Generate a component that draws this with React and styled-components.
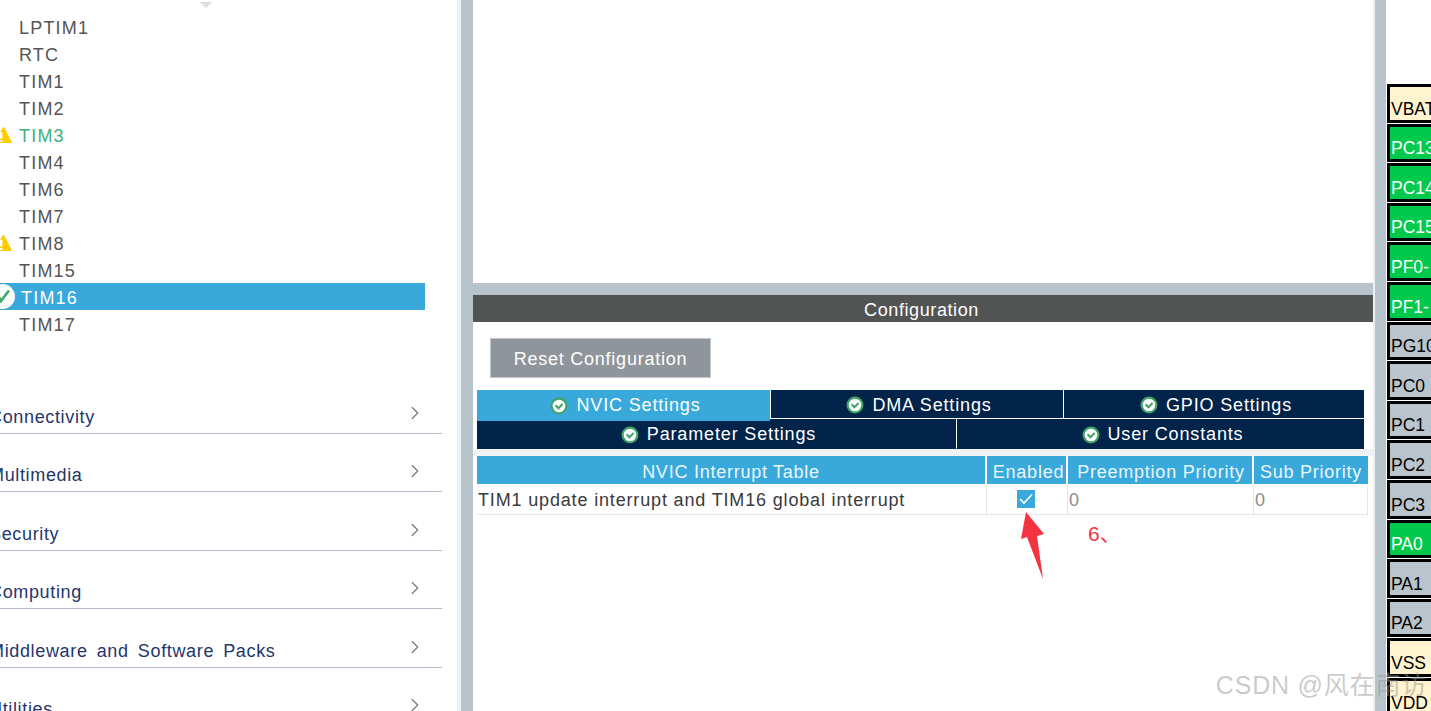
import styled, { createGlobalStyle } from 'styled-components';
import { ChevronRight } from 'lucide-react';

const timers = [
  { name: 'LPTIM1' },
  { name: 'RTC' },
  { name: 'TIM1' },
  { name: 'TIM2' },
  { name: 'TIM3', status: 'warning', active: true },
  { name: 'TIM4' },
  { name: 'TIM6' },
  { name: 'TIM7' },
  { name: 'TIM8', status: 'warning' },
  { name: 'TIM15' },
  { name: 'TIM16', status: 'ok', selected: true },
  { name: 'TIM17' },
];

const categories = ['Connectivity', 'Multimedia', 'Security', 'Computing', 'Middleware and Software Packs', 'Utilities'];

const pins = [
  { name: 'VBAT', kind: 'power' },
  { name: 'PC13', kind: 'used' },
  { name: 'PC14', kind: 'used' },
  { name: 'PC15', kind: 'used' },
  { name: 'PF0-', kind: 'used' },
  { name: 'PF1-', kind: 'used' },
  { name: 'PG10', kind: 'idle' },
  { name: 'PC0', kind: 'idle' },
  { name: 'PC1', kind: 'idle' },
  { name: 'PC2', kind: 'idle' },
  { name: 'PC3', kind: 'idle' },
  { name: 'PA0', kind: 'used' },
  { name: 'PA1', kind: 'idle' },
  { name: 'PA2', kind: 'idle' },
  { name: 'VSS', kind: 'power' },
  { name: 'VDD', kind: 'power' },
];

const pinColors = { power: '#fff4cf', used: '#00c94b', idle: '#b9c4cc' };

const WarningIcon = () => (
  <StatusSlot>
    <svg width='14' height='18' viewBox='0 0 14 18'>
      <path d='M3.5 1 L11.5 16.5 L-5 16.5 Z' fill='#ffcc00' stroke='#ffcc00' strokeWidth='1' strokeLinejoin='round' />
      <rect x='0' y='6' width='2.4' height='6.5' fill='#fff' />
      <rect x='0' y='14' width='2.4' height='2' fill='#fff' />
    </svg>
  </StatusSlot>
);

const OkIcon = () => (
  <StatusSlot>
    <svg width='16' height='27' viewBox='0 0 16 27'>
      <circle cx='2.5' cy='13.5' r='12.5' fill='#fff' />
      <path d='M-1 14 L1 18 L9 7.5' fill='none' stroke='#3ea865' strokeWidth='2.6' />
    </svg>
  </StatusSlot>
);

const TabCheck = () => (
  <svg width='18' height='18' viewBox='0 0 18 18'>
    <circle cx='9' cy='9' r='7.4' fill='#fff' stroke='#3fa567' strokeWidth='2.2' />
    <path d='M5.6 8.2 L8.4 11.2 L12.6 7' fill='none' stroke='#3fa567' strokeWidth='2' />
  </svg>
);

const Tab = ({ children, active, underline }) => (
  <TabButton $active={active} $underline={underline}>
    <TabCheck />
    {children}
  </TabButton>
);

export default function App() {
  return (
    <>
      <GlobalStyle />
      <Page>
        <Sidebar>
          <ScrollArrow />
          <TimerList>
            {timers.map(timer => (
              <TimerRow key={timer.name} $selected={timer.selected} $active={timer.active}>
                {timer.status === 'warning' && <WarningIcon />}
                {timer.status === 'ok' && <OkIcon />}
                {timer.name}
              </TimerRow>
            ))}
          </TimerList>
          <Categories>
            {categories.map(category => (
              <Category key={category}>
                <CategoryName>{category}</CategoryName>
                <ChevronRight size={22} strokeWidth={1.3} color='#777' />
              </Category>
            ))}
          </Categories>
        </Sidebar>

        <Divider />

        <Center>
          <Canvas />
          <BandRow />
          <PanelTitle>Configuration</PanelTitle>
          <ButtonRow>
            <ResetButton>Reset Configuration</ResetButton>
          </ButtonRow>
          <Tabs>
            <TabLine $columns='293px 293px 1fr' $height={29}>
              <Tab active>NVIC Settings</Tab>
              <Tab underline>DMA Settings</Tab>
              <Tab underline>GPIO Settings</Tab>
            </TabLine>
            <TabLine $columns='479px 1fr' $height={30}>
              <Tab>Parameter Settings</Tab>
              <Tab>User Constants</Tab>
            </TabLine>
          </Tabs>
          <TableArea>
            <Table>
              <HeadCell>NVIC Interrupt Table</HeadCell>
              <HeadCell $inset={4}>Enabled</HeadCell>
              <HeadCell $inset={2}>Preemption Priority</HeadCell>
              <HeadCell>Sub Priority</HeadCell>
              <BodyCell>TIM1 update interrupt and TIM16 global interrupt</BodyCell>
              <BodyCell $center>
                <CheckBox>
                  <svg width='14' height='12' viewBox='0 0 14 12'>
                    <path d='M1 6 L5 10 L13 1.5' fill='none' stroke='#fff' strokeWidth='1.7' />
                  </svg>
                </CheckBox>
              </BodyCell>
              <BodyCell $muted>0</BodyCell>
              <BodyCell $muted>0</BodyCell>
            </Table>
          </TableArea>
          <Arrow width='26' height='70' viewBox='0 0 26 70'>
            <path d='M6 0 L24 22 L17 24 L23 67 L7 25 L1 27 Z' fill='#f5333f' />
          </Arrow>
          <StepLabel>6、</StepLabel>
        </Center>

        <Divider $narrow />

        <PinColumn>
          {pins.map(pin => (
            <Pin key={pin.name} $kind={pin.kind}>
              {pin.name}
            </Pin>
          ))}
        </PinColumn>

        <Watermark>CSDN @风在南访</Watermark>
      </Page>
    </>
  );
}

const GlobalStyle = createGlobalStyle`
  html, body {
    margin: 0;
    height: 100%;
    overflow: hidden;
    background: #fff;
  }
`;

const Page = styled.div`
  position: relative;
  display: grid;
  grid-template-columns: 457px 16px 900px 13px 1fr;
  width: 1431px;
  height: 711px;
  overflow: hidden;
  font-family: 'Liberation Sans', Arial, sans-serif;
  font-size: 18px;
  letter-spacing: 0.75px;
`;

const Sidebar = styled.aside`
  overflow: hidden;
  color: #555;
`;

const ScrollArrow = styled.div`
  width: 0;
  height: 0;
  margin: 2px 0 5px 200px;
  border-style: solid;
  border-width: 6px 6px 0;
  border-color: #ddd transparent transparent;
`;

const TimerList = styled.ul`
  list-style: none;
  margin: 0;
  padding: 0;
  width: 425px;
`;

const TimerRow = styled.li`
  position: relative;
  height: 27px;
  line-height: 30px;
  padding-left: ${({ $selected }) => ($selected ? 21 : 19)}px;
  background: ${({ $selected }) => ($selected ? '#39a9dc' : 'transparent')};
  color: ${({ $selected, $active }) => ($selected ? '#fff' : $active ? '#3db27a' : '#555')};
  letter-spacing: 1.2px;
`;

const StatusSlot = styled.span`
  position: absolute;
  left: 0;
  top: 0;
  display: flex;
  align-items: center;
  height: 27px;
`;

const Categories = styled.div`
  width: 442px;
  margin-top: 38px;
`;

const Category = styled.div`
  display: flex;
  align-items: flex-end;
  justify-content: space-between;
  height: 58.5px;
  box-sizing: border-box;
  padding: 0 16px 5px 0;
  border-bottom: 1px solid #b4bccb;
  color: #24366b;

  svg {
    margin-bottom: 4px;
  }
`;

const CategoryName = styled.span`
  margin-left: -11px;
  line-height: 22px;
  letter-spacing: 0.65px;
  word-spacing: 3.5px;
  white-space: nowrap;
`;

const Divider = styled.div`
  background: #b8c4cb;
  border-left: ${({ $narrow }) => ($narrow ? 2 : 4)}px solid #eef0f1;
`;

const Center = styled.main`
  position: relative;
  display: flex;
  flex-direction: column;
  min-width: 0;
`;

const Canvas = styled.div`
  height: 283px;
  background: #fff;
`;

const BandRow = styled.div`
  height: 12px;
  background: #b8c4cb;
`;

const PanelTitle = styled.div`
  height: 27px;
  line-height: 31px;
  padding-right: 3px;
  background: #525453;
  color: #fff;
  text-align: center;
  letter-spacing: 0.6px;
`;

const ButtonRow = styled.div`
  padding: 16px 0 12px 17px;
`;

const ResetButton = styled.button`
  display: block;
  width: 221px;
  height: 40px;
  padding: 2px 0 0;
  border: 1px solid #c3c7cb;
  background: #8f959b;
  color: #fff;
  font: inherit;
  letter-spacing: inherit;
`;

const Tabs = styled.div`
  width: 887px;
  margin-left: 4px;
  background: #02234a;
  letter-spacing: 0.85px;
`;

const TabLine = styled.div`
  display: grid;
  grid-template-columns: ${({ $columns }) => $columns};
  height: ${({ $height }) => $height}px;
`;

const TabButton = styled.div`
  position: relative;
  display: flex;
  align-items: center;
  justify-content: center;
  gap: 8px;
  box-sizing: border-box;
  padding: 2px 0 0 4px;
  height: ${({ $active }) => ($active ? 'calc(100% + 1.5px)' : '100%')};
  background: ${({ $active }) => ($active ? '#39a9dc' : '#02234a')};
  border-left: 1px solid #fff;
  border-bottom: 1px solid ${({ $underline }) => ($underline ? '#fff' : 'transparent')};
  color: #fff;
  z-index: ${({ $active }) => ($active ? 1 : 0)};

  &:first-child {
    border-left: 0;
  }
`;

const TableArea = styled.div`
  padding: 7px 5px 0 4px;
  background: linear-gradient(#f0f2f4 7px, #fff 7px);
`;

const Table = styled.div`
  display: grid;
  grid-template-columns: 510px 81px 186px 114px;
  grid-template-rows: 29px 30px;
  width: 891px;
`;

const HeadCell = styled.div`
  height: 28px;
  line-height: 32px;
  margin-right: 2px;
  padding-left: ${({ $inset }) => $inset || 0}px;
  background: #39a9dc;
  color: #e9f6fc;
  text-align: center;
  white-space: nowrap;
  letter-spacing: 0.75px;

  &:nth-child(4) {
    margin-right: 0;
  }
`;

const BodyCell = styled.div`
  display: flex;
  align-items: center;
  justify-content: ${({ $center }) => ($center ? 'center' : 'flex-start')};
  padding: 1px ${({ $center }) => ($center ? 3 : 0)}px 0 1px;
  border-right: 1px solid #e6e6e6;
  border-bottom: 1px solid #e6e6e6;
  color: ${({ $muted }) => ($muted ? '#8d8d8d' : '#3a3a3a')};
  white-space: nowrap;
  letter-spacing: 0.84px;
`;

const CheckBox = styled.span`
  display: flex;
  align-items: center;
  justify-content: center;
  width: 18px;
  height: 18px;
  margin-top: -3px;
  background: #39a9dc;
`;

const Arrow = styled.svg`
  position: absolute;
  left: 547px;
  top: 512px;
`;

const StepLabel = styled.span`
  position: absolute;
  left: 615px;
  top: 517px;
  color: #f5333f;
  font-family: 'Liberation Sans', 'Noto Sans CJK SC', sans-serif;
  font-size: 21px;
  letter-spacing: 0;
`;

const PinColumn = styled.div`
  display: flex;
  flex-direction: column;
  gap: 1px;
  padding: 84px 0 0 1px;
  min-width: 0;
  overflow: hidden;
`;

const Pin = styled.div`
  flex: none;
  box-sizing: border-box;
  display: flex;
  align-items: flex-end;
  width: 90px;
  height: 38.6px;
  padding: 0 0 0 1px;
  border: 3px solid #000;
  background: ${({ $kind }) => pinColors[$kind]};
  color: ${({ $kind }) => ($kind === 'used' ? '#fff' : '#000')};
  font-size: 17.5px;
  letter-spacing: 0;
  white-space: nowrap;
`;

const Watermark = styled.div`
  position: absolute;
  right: 4px;
  top: 665px;
  color: rgba(150, 150, 150, 0.5);
  font-family: 'Liberation Sans', 'Noto Sans CJK SC', sans-serif;
  font-size: 25px;
  letter-spacing: 0.8px;
  white-space: nowrap;
`;
